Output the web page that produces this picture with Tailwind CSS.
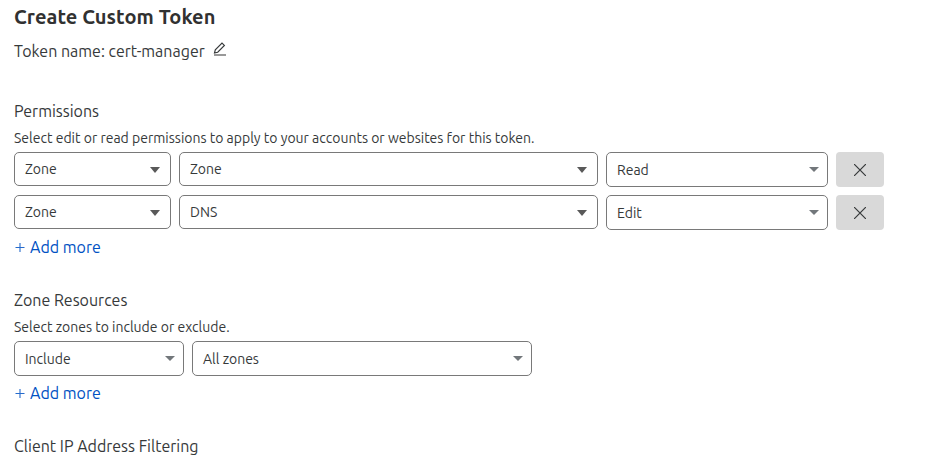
<!DOCTYPE html>
<html lang="en">
<head>
<meta charset="utf-8">
<title>Create Custom Token</title>
<script src="https://cdn.jsdelivr.net/npm/@tailwindcss/browser@4"></script>
</head>
<body class="bg-white text-[#36393a] font-[Ubuntu,'Noto_Sans',sans-serif] h-[462px] overflow-hidden">
<main class="pl-[14px] pt-[5px] whitespace-nowrap">
  <h1 class="text-[20px] tracking-[0.06px] leading-6 font-semibold h-6 text-[#313131]">Create Custom Token</h1>
  <div class="mt-[10px] h-6 flex items-center text-base leading-6">
    <span>Token name: cert-manager</span>
    <svg class="ml-[7px] -mt-1 w-4 h-4" viewBox="0 0 16 16" fill="none" stroke="#36393a"><path d="M2.5 12 3.3 8.8 10 2 12.4 4.4 5.7 11.2Z" stroke-width="1.15"/><path d="M2 14H14" stroke="#555" stroke-width="1.2"/></svg>
  </div>

  <section class="mt-9">
    <h2 class="text-base leading-6 h-6">Permissions</h2>
    <p class="text-sm leading-5 mt-[5px]">Select edit or read permissions to apply to your accounts or websites for this token.</p>
    <div class="mt-1 flex flex-col gap-2 text-sm">
      <div class="flex gap-2 h-[35px]">
        <div class="w-[157px] h-[34px] border border-[#797979] rounded-[5px] px-[10px] flex items-center justify-between"><span>Zone</span><svg class="mt-px w-[10px] h-[6px]" viewBox="0 0 10 6"><path d="M0 0H10L5 6Z" fill="#595959"/></svg></div>
        <div class="w-[419px] h-[34px] border border-[#797979] rounded-[5px] px-[10px] flex items-center justify-between"><span>Zone</span><svg class="mt-px w-[10px] h-[6px]" viewBox="0 0 10 6"><path d="M0 0H10L5 6Z" fill="#595959"/></svg></div>
        <div class="w-[222px] h-[35px] border border-[#797979] rounded-[5px] pl-[10px] pr-2 flex items-center justify-between"><span class="pt-px">Read</span><svg class="w-[10px] h-[5px]" viewBox="0 0 10 5"><path d="M0 0H10L5 5Z" fill="#72777b"/></svg></div>
        <button class="w-12 h-[35px] bg-[#d9d9d9] rounded-[4px] flex items-center justify-center"><svg class="mt-px w-3 h-3" viewBox="0 0 12 12"><path d="M0 0 12 12M12 0 0 12" stroke="#36393a" stroke-width="1.2"/></svg></button>
      </div>
      <div class="flex gap-2 h-[35px]">
        <div class="w-[157px] h-[34px] border border-[#797979] rounded-[5px] px-[10px] flex items-center justify-between"><span>Zone</span><svg class="mt-px w-[10px] h-[6px]" viewBox="0 0 10 6"><path d="M0 0H10L5 6Z" fill="#595959"/></svg></div>
        <div class="w-[419px] h-[34px] border border-[#797979] rounded-[5px] px-[10px] flex items-center justify-between"><span>DNS</span><svg class="mt-px w-[10px] h-[6px]" viewBox="0 0 10 6"><path d="M0 0H10L5 6Z" fill="#595959"/></svg></div>
        <div class="w-[222px] h-[35px] border border-[#797979] rounded-[5px] pl-[10px] pr-2 flex items-center justify-between"><span class="pt-px">Edit</span><svg class="w-[10px] h-[5px]" viewBox="0 0 10 5"><path d="M0 0H10L5 5Z" fill="#72777b"/></svg></div>
        <button class="w-12 h-[35px] bg-[#d9d9d9] rounded-[4px] flex items-center justify-center"><svg class="mt-px w-3 h-3" viewBox="0 0 12 12"><path d="M0 0 12 12M12 0 0 12" stroke="#36393a" stroke-width="1.2"/></svg></button>
      </div>
    </div>
    <a class="mt-[5px] flex items-center h-6 text-base leading-6 text-[#0051c3]"><svg class="w-3 h-3 mr-1" viewBox="0 0 12 12"><path d="M1.5 6.5H10.5M6 2V11" stroke="#0051c3" stroke-width="1.1" stroke-opacity="0.85"/></svg><span>Add more</span></a>
  </section>

  <section class="mt-[29px]">
    <h2 class="text-base leading-6 h-6">Zone Resources</h2>
    <p class="text-sm leading-5 mt-[5px]">Select zones to include or exclude.</p>
    <div class="mt-1 flex gap-2 h-[35px] text-sm">
      <div class="w-[170px] h-[35px] border border-[#797979] rounded-[5px] pl-[10px] pr-2 flex items-center justify-between"><span class="pt-px">Include</span><svg class="w-[10px] h-[5px]" viewBox="0 0 10 5"><path d="M0 0H10L5 5Z" fill="#72777b"/></svg></div>
      <div class="w-[340px] h-[35px] border border-[#797979] rounded-[5px] pl-[10px] pr-2 flex items-center justify-between"><span class="pt-px">All zones</span><svg class="w-[10px] h-[5px]" viewBox="0 0 10 5"><path d="M0 0H10L5 5Z" fill="#72777b"/></svg></div>
    </div>
    <a class="mt-[5px] flex items-center h-6 text-base leading-6 text-[#0051c3]"><svg class="w-3 h-3 mr-1" viewBox="0 0 12 12"><path d="M1.5 6.5H10.5M6 2V11" stroke="#0051c3" stroke-width="1.1" stroke-opacity="0.85"/></svg><span>Add more</span></a>
  </section>

  <section class="mt-[29px]">
    <h2 class="text-base leading-6 h-6">Client IP Address Filtering</h2>
  </section>
</main>
</body>
</html>
